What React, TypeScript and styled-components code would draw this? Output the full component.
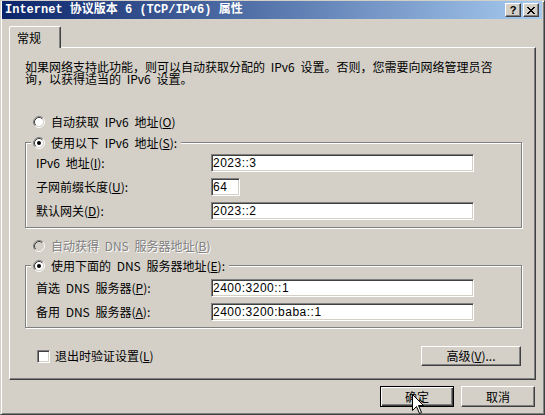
import styled, { createGlobalStyle } from "styled-components";

const GlobalStyle = createGlobalStyle`
  html, body {
    margin : 0;
    padding : 0;
    background : #d4d0c8;
  }
  body {
    width : 545px;
    height : 415px;
    overflow : hidden;
  }
  * {
    box-sizing : border-box;
  }
`;

const UI_FONT = `"Noto Sans CJK SC", "Liberation Sans", sans-serif`;

const Radio = ({ checked, disabled }: { checked?: boolean; disabled?: boolean }) => (
  <RadioSvg width="12" height="12" viewBox="0 0 12 12">
    <circle cx="6" cy="6" r="4.5" fill={disabled ? "#d4d0c8" : "#fff"} />
    <path d="M2.11 9.89A5.5 5.5 0 0 1 9.89 2.11" stroke="#808080" fill="none" />
    <path d="M9.89 2.11A5.5 5.5 0 0 1 2.11 9.89" stroke="#fff" fill="none" />
    <path d="M2.82 9.18A4.5 4.5 0 0 1 9.18 2.82" stroke="#404040" fill="none" />
    <path d="M9.18 2.82A4.5 4.5 0 0 1 2.82 9.18" stroke="#d4d0c8" fill="none" />
    {checked && <circle cx="6" cy="6" r="2" fill="#000" />}
  </RadioSvg>
);

const CloseGlyph = () => (
  <svg width="8" height="7" viewBox="0 0 8 7" shapeRendering="crispEdges">
    <path
      d="M0 0h2v1h-2z M6 0h2v1h-2z M1 1h2v1h-2z M5 1h2v1h-2z M2 2h4v1h-4z M3 3h2v1h-2z M2 4h4v1h-4z M1 5h2v1h-2z M5 5h2v1h-2z M0 6h2v1h-2z M6 6h2v1h-2z"
      fill="#000"
    />
  </svg>
);

const Cursor = () => (
  <CursorSvg width="13" height="21" viewBox="0 0 13 21">
    <path
      d="M0.5 0.5V16.5L4.5 12.5L7.5 19.5L9.5 18.5L6.5 11.5H11.5Z"
      fill="#fff"
      stroke="#000"
      strokeLinejoin="miter"
    />
  </CursorSvg>
);

const App = () => {
  return (
    <>
      <GlobalStyle />
      <Window>
        <TitleBar>
          <TitleText>Internet 协议版本 6 (TCP/IPv6) 属性</TitleText>
          <CaptionButton>
            <HelpGlyph>?</HelpGlyph>
          </CaptionButton>
          <CaptionButton $gap={2}>
            <CloseGlyph />
          </CaptionButton>
        </TitleBar>

        <Body>
          <TabStrip>
            <Tab>常规</Tab>
          </TabStrip>
          <Panel>
            <Intro>
              如果网络支持此功能，则可以自动获取分配的 IPv6 设置。否则，您需要向网络管理员咨询，以获得适当的 IPv6 设置。
            </Intro>

            <OptionRow $top={30}>
              <Radio />
              <OptionText>自动获取 IPv6 地址(<u>O</u>)</OptionText>
            </OptionRow>

            <GroupBox $top={6} $padTop={5} $padBottom={7}>
              <GroupLegend>
                <LegendInner>
                  <Radio checked />
                  <OptionText>使用以下 IPv6 地址(<u>S</u>):</OptionText>
                </LegendInner>
              </GroupLegend>
              <FieldRow>
                <FieldLabel>IPv6 地址(<u>I</u>):</FieldLabel>
                <TextBox $w={263} readOnly defaultValue="2023::3" />
              </FieldRow>
              <FieldRow>
                <FieldLabel>子网前缀长度(<u>U</u>):</FieldLabel>
                <TextBox $w={29} readOnly defaultValue="64" />
              </FieldRow>
              <FieldRow>
                <FieldLabel>默认网关(<u>D</u>):</FieldLabel>
                <TextBox $w={263} readOnly defaultValue="2023::2" />
              </FieldRow>
            </GroupBox>

            <OptionRow $top={11}>
              <Radio disabled />
              <OptionText $disabled>自动获得 DNS 服务器地址(<u>B</u>)</OptionText>
            </OptionRow>

            <GroupBox $top={5} $padTop={7} $padBottom={6}>
              <GroupLegend>
                <LegendInner>
                  <Radio checked />
                  <OptionText>使用下面的 DNS 服务器地址(<u>E</u>):</OptionText>
                </LegendInner>
              </GroupLegend>
              <FieldRow>
                <FieldLabel>首选 DNS 服务器(<u>P</u>):</FieldLabel>
                <TextBox $w={263} readOnly defaultValue="2400:3200::1" />
              </FieldRow>
              <FieldRow>
                <FieldLabel>备用 DNS 服务器(<u>A</u>):</FieldLabel>
                <TextBox $w={263} readOnly defaultValue="2400:3200:baba::1" />
              </FieldRow>
            </GroupBox>

            <CheckRow>
              <CheckBox />
              <OptionText>退出时验证设置(<u>L</u>)</OptionText>
              <Spacer />
              <PushButton $w={100} $h={20}>高级(<u>V</u>)...</PushButton>
            </CheckRow>
          </Panel>

          <ButtonRow>
            <PushButton $w={74} $h={21} $default>确定</PushButton>
            <PushButton $w={74} $h={21}>取消</PushButton>
          </ButtonRow>
        </Body>
        <Cursor />
      </Window>
    </>
  );
};

export default App;

const Window = styled.div`
  position : relative;
  width : 545px;
  height : 415px;
  background : #d4d0c8;
  border : 1px solid;
  border-color : #d4d0c8 #404040 #404040 #d4d0c8;
  box-shadow : inset 1px 1px #fff, inset -1px -1px #808080;
  padding : 0 2px 2px 1px;
  display : flex;
  flex-direction : column;
  font-family : ${UI_FONT};
  font-size : 12px;
  color : #000;
  overflow : hidden;
`;

const TitleBar = styled.div`
  height : 18px;
  flex-shrink : 0;
  display : flex;
  align-items : center;
  padding : 0 3px 0 3px;
  background : linear-gradient(to right, #0a246a, #a6caf0);
`;

const TitleText = styled.div`
  flex : 1;
  color : #fff;
  font-family : "Liberation Mono", "Noto Sans CJK SC", monospace;
  font-weight : 700;
  font-size : 12px;
  line-height : 14px;
  white-space : nowrap;
`;

const CaptionButton = styled.div<{ $gap?: number }>`
  width : 16px;
  height : 14px;
  margin-left : ${(p) => p.$gap ?? 0}px;
  background : #d4d0c8;
  border : 1px solid;
  border-color : #fff #404040 #404040 #fff;
  box-shadow : inset -1px -1px #808080;
  display : flex;
  align-items : center;
  justify-content : center;
`;

const HelpGlyph = styled.span`
  font-family : "Liberation Sans", sans-serif;
  font-weight : 700;
  font-size : 11px;
  line-height : 11px;
  margin-top : 1px;
`;

const Body = styled.div`
  flex : 1;
  display : flex;
  flex-direction : column;
  padding : 7px 6px 0 7px;
`;

const TabStrip = styled.div`
  display : flex;
  height : 21px;
  position : relative;
  z-index : 1;
`;

const Tab = styled.div`
  width : 52px;
  height : 22px;
  padding-left : 7px;
  display : flex;
  align-items : center;
  background : #d4d0c8;
  border-left : 1px solid #fff;
  border-top : 1px solid #fff;
  border-right : 1px solid #404040;
  border-radius : 2px 2px 0 0;
  box-shadow : inset -1px 0 #808080;
  line-height : 14px;
`;

const Panel = styled.div`
  height : 333px;
  border : 1px solid;
  border-color : #fff #404040 #404040 #fff;
  box-shadow : inset -1px -1px #808080;
  padding : 13px 13px 0 15px;
  display : flex;
  flex-direction : column;
  word-spacing : 3px;
`;

const Intro = styled.p`
  margin : 0;
  width : 480px;
  height : 24px;
  line-height : 12px;
`;

const OptionRow = styled.div<{ $top: number }>`
  display : flex;
  align-items : center;
  gap : 6px;
  height : 14px;
  padding-left : 8px;
  margin-top : ${(p) => p.$top}px;
`;

const RadioSvg = styled.svg`
  flex-shrink : 0;
  display : block;
`;

const OptionText = styled.span<{ $disabled?: boolean }>`
  white-space : nowrap;
  line-height : 14px;
  color : ${(p) => (p.$disabled ? "#808080" : "#000")};
  text-shadow : ${(p) => (p.$disabled ? "1px 1px 0 #fff" : "none")};
`;

const GroupBox = styled.fieldset<{ $top: number; $padTop: number; $padBottom: number }>`
  margin : ${(p) => p.$top}px 0 0 0;
  padding : ${(p) => p.$padTop}px 0 ${(p) => p.$padBottom}px 5px;
  min-width : 0;
  border : 1px solid #808080;
  box-shadow : 1px 1px #fff, inset 1px 1px #fff;
`;

const GroupLegend = styled.legend`
  padding : 0 4px 0 2px;
  margin : 0;
  height : 14px;
  background : #d4d0c8;
`;

const LegendInner = styled.span`
  display : inline-flex;
  align-items : center;
  gap : 6px;
  height : 14px;
`;

const FieldRow = styled.div`
  display : flex;
  align-items : center;
  height : 18px;
  padding-left : 5px;
  & + & {
    margin-top : 6px;
  }
`;

const FieldLabel = styled.label`
  width : 175px;
  white-space : nowrap;
  line-height : 14px;
`;

const TextBox = styled.input<{ $w: number }>`
  appearance : none;
  outline : none;
  width : ${(p) => p.$w}px;
  height : 18px;
  margin : 0;
  padding : 0 2px 0 1px;
  background : #fff;
  border : 1px solid;
  border-color : #808080 #fff #fff #808080;
  box-shadow : inset 1px 1px #404040, inset -1px -1px #d4d0c8;
  font-family : "Liberation Sans", sans-serif;
  font-size : 12px;
  letter-spacing : 0.5px;
  color : #000;
`;

const CheckRow = styled.div`
  display : flex;
  align-items : center;
  height : 20px;
  margin-top : 18px;
  padding-left : 12px;
  gap : 5px;
`;

const CheckBox = styled.span`
  width : 13px;
  height : 13px;
  flex-shrink : 0;
  background : #fff;
  border : 1px solid;
  border-color : #808080 #fff #fff #808080;
  box-shadow : inset 1px 1px #404040, inset -1px -1px #d4d0c8;
`;

const Spacer = styled.div`
  flex : 1;
`;

const PushButton = styled.div<{ $w: number; $h: number; $default?: boolean }>`
  width : ${(p) => p.$w}px;
  height : ${(p) => p.$h}px;
  flex-shrink : 0;
  display : flex;
  align-items : center;
  justify-content : center;
  background : #d4d0c8;
  border : 1px solid;
  border-color : ${(p) => (p.$default ? "#000" : "#fff #404040 #404040 #fff")};
  box-shadow : ${(p) =>
    p.$default
      ? "inset 1px 1px #fff, inset -1px -1px #404040, inset -2px -2px #808080"
      : "inset -1px -1px #808080"};
  margin-right : 1px;
  line-height : 14px;
  white-space : nowrap;
  word-spacing : 0;
`;

const ButtonRow = styled.div`
  display : flex;
  justify-content : flex-end;
  gap : 6px;
  margin-top : 6px;
`;

const CursorSvg = styled.svg`
  position : absolute;
  left : 411px;
  top : 393px;
  pointer-events : none;
`;
